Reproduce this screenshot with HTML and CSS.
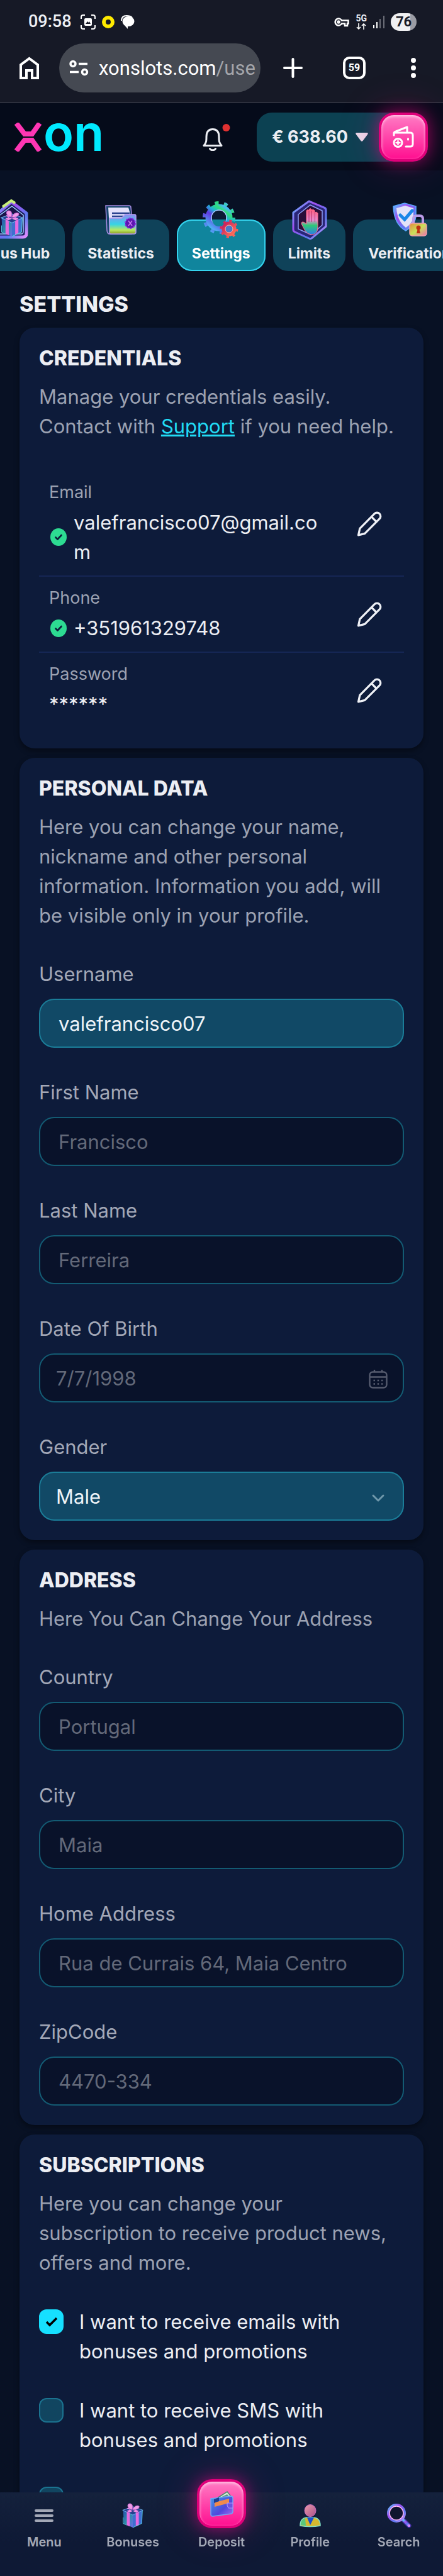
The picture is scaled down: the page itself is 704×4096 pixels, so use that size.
FILE: index.html
```html
<!DOCTYPE html>
<html lang="en">
<head>
    <meta charset="UTF-8">
    <meta name="viewport" content="width=device-width, initial-scale=1.0">
    <title>Settings</title>
    <link rel="stylesheet" href="styles.css">
</head>
<body>
    <!-- shared gradients -->
    <svg class="defs" width="0" height="0" aria-hidden="true">
        <defs>
            <linearGradient id="neon" x1="0" y1="0" x2="1" y2="1">
                <stop offset="0" stop-color="#54c8ff"/>
                <stop offset="0.35" stop-color="#a04ff0"/>
                <stop offset="0.7" stop-color="#5a7bf0"/>
                <stop offset="1" stop-color="#e58cff"/>
            </linearGradient>
            <linearGradient id="gear" x1="0.1" y1="1" x2="0.8" y2="0">
                <stop offset="0" stop-color="#4fb4f5"/>
                <stop offset="0.45" stop-color="#6038e0"/>
                <stop offset="0.65" stop-color="#1fb3d8"/>
                <stop offset="0.85" stop-color="#2fe07a"/>
                <stop offset="1" stop-color="#48b8f0"/>
            </linearGradient>
            <linearGradient id="red" x1="0" y1="0" x2="1" y2="1">
                <stop offset="0" stop-color="#c81f5c"/>
                <stop offset="1" stop-color="#ff7058"/>
            </linearGradient>
            <linearGradient id="folder" x1="0" y1="0" x2="0" y2="1">
                <stop offset="0" stop-color="#8f8df0"/>
                <stop offset="0.5" stop-color="#35d4e6"/>
                <stop offset="0.8" stop-color="#b9e860"/>
                <stop offset="1" stop-color="#8a9a20"/>
            </linearGradient>
            <linearGradient id="hand" x1="0" y1="0" x2="0" y2="1">
                <stop offset="0" stop-color="#ff5a78"/>
                <stop offset="0.45" stop-color="#e58ad0"/>
                <stop offset="0.65" stop-color="#2fc878"/>
                <stop offset="1" stop-color="#2b7be8"/>
            </linearGradient>
            <linearGradient id="lock" x1="0" y1="0" x2="1" y2="1">
                <stop offset="0" stop-color="#e88b3c"/>
                <stop offset="0.5" stop-color="#c9e05a"/>
                <stop offset="1" stop-color="#f06fb0"/>
            </linearGradient>
            <linearGradient id="box" x1="0" y1="0" x2="1" y2="1">
                <stop offset="0" stop-color="#2b4fb0"/>
                <stop offset="0.5" stop-color="#2a8fa8"/>
                <stop offset="1" stop-color="#6d6ae8"/>
            </linearGradient>
            <linearGradient id="purse" x1="0" y1="0" x2="1" y2="1">
                <stop offset="0" stop-color="#3f9be8"/>
                <stop offset="0.6" stop-color="#5148dc"/>
                <stop offset="1" stop-color="#a46cf0"/>
            </linearGradient>
            <linearGradient id="head" x1="0" y1="0" x2="1" y2="1">
                <stop offset="0" stop-color="#e89aa8"/>
                <stop offset="1" stop-color="#a8508c"/>
            </linearGradient>
            <symbol id="gift" viewBox="0 0 36 42">
                <path d="M2 12 18 18v23L3 34z" fill="url(#box)"/>
                <path d="M34 12 18 18v23l15-7z" fill="#3f6fd0"/>
                <path d="M1 12 18 6l17 6-17 8z" fill="#24408f" stroke="#6fb8f0"/>
                <path d="M8 14v23l5 2V17zM28 14v23l-5 2V17z" fill="#e66ae0"/>
                <path d="M8 13 24 7l4 2-16 7zM28 13 12 7 8 9l16 7z" fill="#f08ae8"/>
                <path d="M17 11C8 9 8 1 13 1s5 5 4 10zM18 11c1-5 7-8 10-6s-3 7-10 6z" fill="#f09ce6" stroke="#c060d0"/>
                <path d="M2 24v10l6 3M34 13l-1 21-15 7" fill="none" stroke="#58d0e8"/>
            </symbol>
            <symbol id="pencil" viewBox="0 0 24 24">
                <path d="M16.2 3.6a2.9 2.9 0 0 1 4.2 4.2L8.2 20 2.9 21.3 4.1 15.8zM13.7 6.1l4.2 4.2" fill="none" stroke="#eef0f5" stroke-width="1.700" stroke-linecap="round" stroke-linejoin="round"/>
            </symbol>
            <symbol id="verified" viewBox="0 0 26 28">
                <ellipse cx="13" cy="14" rx="13" ry="14" fill="#2ddb92"/>
                <path d="M8.500 14.500l3 3 6-6.500" fill="none" stroke="#0d1b3a" stroke-width="2.600" stroke-linecap="round" stroke-linejoin="round"/>
            </symbol>
        </defs>
    </svg>

    <div class="chrome">
        <div class="status">
            <span class="clock">09:58</span>
            <svg width="24" height="24" viewBox="0 0 24 24" fill="none" stroke="#fff" stroke-width="2">
                <path d="M1 7V4q0-3 3-3h3M17 1h3q3 0 3 3v3M23 17v3q0 3-3 3h-3M7 23H4q-3 0-3-3v-3"/>
                <rect x="6" y="6" width="12" height="12" rx="2" fill="#fff" stroke="none"/>
                <path d="M8 15l3-4 2 2 1-2 2 4z" fill="#161926" stroke="none"/>
            </svg>
            <svg width="20" height="20" viewBox="0 0 20 20"><circle cx="10" cy="10" r="7" fill="none" stroke="#ffea00" stroke-width="6"/></svg>
            <svg width="22" height="22" viewBox="0 0 22 22">
                <path d="M1 9C1 3 5 1 9 1c5 0 8 2 9 3" fill="none" stroke="#fff" stroke-width="2"/>
                <ellipse cx="12" cy="10" rx="9.500" ry="8" fill="#fff"/>
                <path d="M4 14l7 8v-5z" fill="#fff"/>
            </svg>
            <svg class="status-right" width="24" height="16" viewBox="0 0 24 16" fill="none" stroke="#fff" stroke-width="2.500">
                <path d="M12 5.500h10.500v5H21V14h-4v-3.500h-5a5.500 5.500 0 1 1 0-5z"/>
                <circle cx="7" cy="8" r="1.500"/>
            </svg>
            <span class="network">
                5G
                <svg width="16" height="10" viewBox="0 0 16 10" fill="none" stroke="#fff" stroke-width="1.600"><path d="M4 0v9M1 6l3 3 3-3M12 10V1M9 4l3-3 3 3"/></svg>
            </span>
            <svg width="18" height="20" viewBox="0 0 18 20">
                <path d="M0 15h2v5H0zM5 10h2v10H5z" fill="#fff"/>
                <path d="M10 5h2v15h-2zM16 0h2v20h-2z" fill="#6c6e78"/>
            </svg>
            <span class="battery">76</span>
        </div>
        <div class="toolbar">
            <button type="button" class="plain" aria-label="Home">
                <svg width="31" height="36" viewBox="0 0 31 36" fill="none" stroke="#fff" stroke-width="4"><path d="M2 34V13L15.500 3 29 13v21h-9V22h-9v12z"/></svg>
            </button>
            <button type="button" class="address">
                <svg width="31" height="26" viewBox="0 0 31 26" fill="none" stroke="#fff" stroke-width="3.500"><circle cx="6" cy="6.500" r="4"/><path d="M15 6.500h14M1 19.500h14"/><circle cx="24.500" cy="19.500" r="4"/></svg>
                <span class="url">xonslots.com<span>/use</span></span>
            </button>
            <div class="toolbar-actions">
                <button type="button" class="plain" aria-label="New tab">
                    <svg width="31" height="32" viewBox="0 0 31 32" stroke="#fff" stroke-width="4" stroke-linecap="round"><path d="M2 16h27M15.500 2v28"/></svg>
                </button>
                <button type="button" class="tab-count" aria-label="Open tabs">59</button>
                <button type="button" class="plain" aria-label="More">
                    <svg width="24" height="32" viewBox="0 0 24 32" fill="#fff"><circle cx="12" cy="4" r="4"/><circle cx="12" cy="16" r="4"/><circle cx="12" cy="28" r="4"/></svg>
                </button>
            </div>
        </div>
    </div>

    <header class="header">
        <a href="#" class="logo" aria-label="xon">
            <svg width="142" height="46" viewBox="0 0 142 46">
                <path d="M4 1l13 17h12L41 1M4 45l13-17h12l12 17" fill="none" stroke="#ff36b4" stroke-width="8"/>
                <text x="47" y="45" class="logo-text">on</text>
            </svg>
        </a>
        <button type="button" class="plain bell" aria-label="Notifications">
            <svg width="44" height="44" viewBox="0 0 44 44" fill="none">
                <path d="M2 35.500h28c-4-5-4-7-4-14C26 14 23 9.500 16 9.500S6 14 6 21.500c0 7 0 9-4 14z" stroke="#eceef3" stroke-width="3" stroke-linejoin="round"/>
                <path d="M11.500 40.500a5 4 0 0 0 9 0" stroke="#eceef3" stroke-width="3" stroke-linecap="round"/>
                <circle cx="37.500" cy="7" r="6" fill="#e03131"/>
            </svg>
        </button>
        <div class="wallet">
            <button type="button" class="balance">€ 638.60
                <svg width="20" height="14" viewBox="0 0 20 14"><path d="M2 0h16q3 0 1 3l-7.500 10q-1.500 1.500-3 0L1 3q-2-3 1-3z" fill="#ead9ea"/></svg>
            </button>
            <button type="button" class="pink-button" aria-label="Deposit">
                <svg width="34" height="36" viewBox="0 0 34 36" fill="none" stroke="#fff" stroke-width="3" stroke-linecap="round" stroke-linejoin="round">
                    <path d="M2 15v-3q0-2 3-3L23 2v8M2 11h26q4 0 4 4v14q0 4-4 4h-7"/>
                    <circle cx="8.500" cy="27" r="6.500"/><path d="M8.500 24v6M5.500 27h6" stroke-width="2.400"/>
                    <path d="M24.500 20.500v1.500"/>
                </svg>
            </button>
        </div>
    </header>

    <nav class="tabs" aria-label="Account">
        <div class="tabs-list">
            <a href="#" class="tab">
                <svg width="60" height="64" viewBox="0 0 60 64">
                    <path d="M4 26 30 4l24 18v32q0 6-6 6H10q-6 0-6-6z" fill="#1b1d5c" stroke="url(#neon)" stroke-width="5" stroke-linejoin="round"/>
                    <path d="M9 27 31 11l18 14v26q0 4-4 4H13q-4 0-4-4z" fill="#1a1348" stroke="#9cc9ff" stroke-width="1.500"/>
                    <path d="M16 12 30 2l6 4" fill="none" stroke="#c9f07a" stroke-width="4"/>
                    <use href="#gift" x="12" y="17" width="38" height="43"/>
                </svg>
                <span>Bonus Hub</span>
            </a>
            <a href="#" class="tab">
                <svg width="60" height="64" viewBox="0 0 60 64">
                    <path d="M6 10h37q3 0 3 3l1 10v32H12q-3 0-4-5z" fill="#17456d" stroke="#a78be0" stroke-width="1.500"/>
                    <path d="M10 13h32l3 10v22H12z" fill="#e4e2fb"/>
                    <path d="M16 22h28M16 27h18" stroke="#2b4390" stroke-width="2.400"/>
                    <path d="M12 30h19l6-6h15q2 0 2 3v25q0 3-3 3H14q-2 0-2-3z" fill="url(#folder)" stroke="#b29af0" stroke-width="1.500"/>
                    <circle cx="45" cy="38" r="8" fill="#5c16b0" stroke="#8a2be2" stroke-dasharray="3 2" stroke-width="2"/>
                    <path d="M42 34l6 8M48 34l-6 8" stroke="#c97bf5" stroke-width="1.500"/>
                </svg>
                <span>Statistics</span>
            </a>
            <a href="#" class="tab active" aria-current="page">
                <svg width="60" height="64" viewBox="0 0 60 64" fill="none">
                    <circle cx="27" cy="29" r="23" stroke="url(#gear)" stroke-width="6" stroke-dasharray="6 8.450"/>
                    <circle cx="27" cy="29" r="16.500" stroke="url(#gear)" stroke-width="10"/>
                    <circle cx="27" cy="29" r="12" stroke="#a9c4ff" stroke-width="1.500"/>
                    <circle cx="27" cy="29" r="11" fill="#0b1a33"/>
                    <path d="M16 32a11 11 0 0 0 22 0z" fill="#10859d"/>
                    <circle cx="43" cy="47" r="12.500" stroke="url(#red)" stroke-width="4" stroke-dasharray="4 5.800"/>
                    <circle cx="43" cy="47" r="8.500" stroke="url(#red)" stroke-width="6"/>
                    <circle cx="43" cy="47" r="6" fill="#4a79c8" stroke="#ffb0a0" stroke-width="1"/>
                </svg>
                <span>Settings</span>
            </a>
            <a href="#" class="tab">
                <svg width="60" height="64" viewBox="0 0 60 64" fill="none">
                    <path d="M30 3 54 13q3 1 3 4v26L34 62q-2 1-4 0L8 52q-3-1-3-4V21z" fill="#2a2577" stroke="url(#neon)" stroke-width="3" stroke-linejoin="round"/>
                    <path d="M32 9 51 18v23L33 56 13 47V24z" fill="#2a0d38" stroke="#8c9df5" stroke-width="1.500"/>
                    <path d="M26 39V18q2-3 4 0v-2q2-3 4 0v1q3-2 5 1v3q3-2 5 1v22q0 12-10 12-6 0-10-6l-6-11q0-5 5-2z" fill="url(#hand)" stroke="#ff6a8a" stroke-width="1"/>
                    <path d="M30 18v18M34.500 18v18M39.500 19v17" stroke="#b8306a" stroke-width="1"/>
                </svg>
                <span>Limits</span>
            </a>
            <a href="#" class="tab">
                <svg width="60" height="64" viewBox="0 0 60 64" fill="none">
                    <path d="M4 11 22 6l18 5v14q0 14-16 25Q5 40 4 11z" fill="url(#neon)" stroke="#58a8ff" stroke-width="1.500"/>
                    <path d="M9 14 23 10l13 4v12q0 11-12 19Q10 34 9 14z" fill="#e3e2f8"/>
                    <path d="M15 25l7 7 12-14" stroke="#1a86e8" stroke-width="5" stroke-linecap="round"/>
                    <path d="M36 42V31q0-5 5-5h5q5 0 5 5v11" stroke="#b99be8" stroke-width="4"/>
                    <rect x="30" y="38" width="27" height="20" rx="4" fill="url(#lock)" stroke="#f0a0a8" stroke-width="1.500"/>
                    <circle cx="44" cy="45" r="3.500" fill="#c03010"/><path d="M43 46h2l2 8h-6z" fill="#c03010"/>
                </svg>
                <span>Verification</span>
            </a>
        </div>
    </nav>

    <main class="content">
        <h1>SETTINGS</h1>

        <section class="card">
            <h2>CREDENTIALS</h2>
            <p>Manage your credentials easily. Contact with <a href="#">Support</a> if you need help.</p>
            <div class="credentials">
                <div class="credential">
                    <div class="credential-info">
                        <div class="credential-name">Email</div>
                        <div class="credential-value">
                            <svg width="26" height="28"><use href="#verified"/></svg>
                            <span>valefrancisco07@gmail.com</span>
                        </div>
                    </div>
                    <button type="button" class="edit" aria-label="Edit email"><svg width="46" height="46"><use href="#pencil"/></svg></button>
                </div>
                <div class="credential">
                    <div class="credential-info">
                        <div class="credential-name">Phone</div>
                        <div class="credential-value">
                            <svg width="26" height="28"><use href="#verified"/></svg>
                            <span>+351961329748</span>
                        </div>
                    </div>
                    <button type="button" class="edit" aria-label="Edit phone"><svg width="46" height="46"><use href="#pencil"/></svg></button>
                </div>
                <div class="credential">
                    <div class="credential-info">
                        <div class="credential-name">Password</div>
                        <div class="credential-value password">******</div>
                    </div>
                    <button type="button" class="edit" aria-label="Edit password"><svg width="46" height="46"><use href="#pencil"/></svg></button>
                </div>
            </div>
        </section>

        <section class="card">
            <h2>PERSONAL DATA</h2>
            <p>Here you can change your name, nickname and other personal information. Information you add, will be visible only in your profile.</p>
            <form class="fields">
                <div class="field">
                    <label for="username">Username</label>
                    <input type="text" id="username" value="valefrancisco07">
                </div>
                <div class="field">
                    <label for="first-name">First Name</label>
                    <input type="text" id="first-name" value="Francisco" disabled>
                </div>
                <div class="field">
                    <label for="last-name">Last Name</label>
                    <input type="text" id="last-name" value="Ferreira" disabled>
                </div>
                <div class="field">
                    <label for="birth">Date Of Birth</label>
                    <div class="control">
                        <input type="text" id="birth" class="with-icon" value="7/7/1998" disabled>
                        <svg class="control-icon" width="30" height="30" viewBox="0 0 30 30" fill="none" stroke="#555b6e" stroke-width="2.400">
                            <rect x="1.500" y="3.500" width="27" height="25" rx="5"/><path d="M1.500 11.500h27M9 0v4M21 0v4"/>
                            <path d="M7.500 17h2.500M13.700 17h2.500M20 17h2.500M7.500 22.500h2.500M13.700 22.500h2.500M20 22.500h2.500"/>
                        </svg>
                    </div>
                </div>
                <div class="field">
                    <label for="gender">Gender</label>
                    <div class="control">
                        <select id="gender">
                            <option>Male</option>
                            <option>Female</option>
                        </select>
                        <svg class="control-icon" width="30" height="30" viewBox="0 0 30 30" fill="none" stroke="#6f97aa" stroke-width="3" stroke-linecap="round" stroke-linejoin="round"><path d="M7 12l8 8 8-8"/></svg>
                    </div>
                </div>
            </form>
        </section>

        <section class="card">
            <h2>ADDRESS</h2>
            <p>Here You Can Change Your Address</p>
            <form class="fields">
                <div class="field">
                    <label for="country">Country</label>
                    <input type="text" id="country" value="Portugal" disabled>
                </div>
                <div class="field">
                    <label for="city">City</label>
                    <input type="text" id="city" value="Maia" disabled>
                </div>
                <div class="field">
                    <label for="home">Home Address</label>
                    <input type="text" id="home" value="Rua de Currais 64, Maia Centro" disabled>
                </div>
                <div class="field">
                    <label for="zip">ZipCode</label>
                    <input type="text" id="zip" value="4470-334" disabled>
                </div>
            </form>
        </section>

        <section class="card last">
            <h2>SUBSCRIPTIONS</h2>
            <p>Here you can change your subscription to receive product news, offers and more.</p>
            <div class="subscriptions">
                <label class="check"><input type="checkbox" checked><span>I want to receive emails with bonuses and promotions</span></label>
                <label class="check"><input type="checkbox"><span>I want to receive SMS with bonuses and promotions</span></label>
                <label class="check"><input type="checkbox" aria-label="Other promotions"></label>
            </div>
        </section>
    </main>

    <nav class="bottom-nav" aria-label="Main">
        <a href="#">
            <svg width="40" height="40" viewBox="0 0 40 40" stroke="#a3a8b6" stroke-width="4" stroke-linecap="round"><path d="M7 12h26M7 20h26M7 28h26"/></svg>
            Menu
        </a>
        <a href="#">
            <svg width="40" height="40"><use href="#gift"/></svg>
            Bonuses
        </a>
        <a href="#">
            <span class="pink-button">
                <svg width="40" height="42" viewBox="0 0 40 42">
                    <path d="M7 16 29 2l5 6v14H8z" fill="#d8ead8" stroke="#4d8870" stroke-width="1.500"/>
                    <path d="M10 15 29 6l3 4-20 9z" fill="#5f9a80"/>
                    <path d="M3 13l32-4q3 0 3 3v22q0 2-2 3L6 41q-3 0-3-3z" fill="url(#purse)" stroke="#6fa8f5" stroke-width="1.500"/>
                    <path d="M9 19l23-6v7L9 26z" fill="#f08a4c"/>
                    <path d="M8 14l8-3v6l-8 3z" fill="#1d3e94"/>
                    <path d="M29 20h9v8h-7q-3-4-2-8z" fill="#6d52e0" stroke="#b49cff"/>
                </svg>
            </span>
            Deposit
        </a>
        <a href="#">
            <svg width="40" height="40" viewBox="0 0 40 40">
                <ellipse cx="20" cy="12" rx="9" ry="9.500" fill="url(#head)" stroke="#c86cc0"/>
                <path d="M4 36q0-13 12-13h8q12 0 12 13-16 3-32 0z" fill="#d5b92e" stroke="#7fe0c8" stroke-width="1.500"/>
                <path d="M5 35q0-9 7-11l1 12z" fill="#58c87c"/>
                <path d="M15 23h11l-6 12z" fill="#1a50d0"/>
            </svg>
            Profile
        </a>
        <a href="#">
            <svg width="40" height="40" viewBox="0 0 40 40" fill="none">
                <path d="M27 27l9 9" stroke="#3c2fa0" stroke-width="7" stroke-linecap="round"/>
                <path d="M27 27l9 9" stroke="url(#neon)" stroke-width="4" stroke-linecap="round"/>
                <circle cx="16" cy="16" r="13" fill="#10152f" stroke="url(#neon)" stroke-width="4"/>
                <circle cx="16" cy="16" r="11" stroke="#ffb3f5" stroke-width="1.500"/>
            </svg>
            Search
        </a>
    </nav>
</body>
</html>
```
FILE: styles.css
```css
* {
    box-sizing: border-box;
}
body {
    margin: 0;
    min-height: 100vh;
    background-color: #081124;
    color: #eceef3;
    font-family: Inter, "Liberation Sans", sans-serif;
    font-size: 31px;
    line-height: 47px;
    overflow-x: hidden;
}
svg {
    display: block;
    flex-shrink: 0;
}
.defs {
    position: absolute;
}
button, input, select {
    margin: 0;
    font-family: inherit;
    font-size: inherit;
    color: inherit;
}
button {
    padding: 0;
    border: none;
    background: none;
    cursor: pointer;
}
a {
    color: inherit;
    text-decoration: none;
}

/* browser bar */
.chrome {
    background-color: #161926;
    border-bottom: 2px solid #2d303d;
    font-family: Roboto, Arial, sans-serif;
}
.status {
    display: flex;
    align-items: center;
    gap: 10px;
    height: 69px;
    padding: 0 42px 0 45px;
}
.clock {
    margin-right: 4px;
    font-size: 27px;
    font-weight: 500;
}
.status-right {
    margin-left: auto;
}
.network {
    display: flex;
    flex-direction: column;
    align-items: center;
    gap: 2px;
    font-size: 14px;
    font-weight: 700;
    line-height: 12px;
}
.battery {
    width: 41px;
    border-radius: 14px;
    background: linear-gradient(90deg, #f0f0f2 76%, #9b9ca4 76%);
    color: #161926;
    font-size: 22px;
    font-weight: 700;
    line-height: 28px;
    text-align: center;
}
.toolbar {
    display: flex;
    align-items: center;
    padding: 0 35px 15px 31px;
}
.address {
    display: flex;
    flex: 1;
    align-items: center;
    gap: 16px;
    min-width: 0;
    height: 78px;
    margin: 0 36px 0 32px;
    padding: 0 8px 0 16px;
    border-radius: 39px;
    background-color: #454952;
    font-size: 31px;
    color: #fff;
}
.url {
    white-space: nowrap;
}
.url span {
    color: #a3a5aa;
}
.toolbar-actions {
    display: flex;
    align-items: center;
    gap: 64px;
}
.tab-count {
    width: 36px;
    height: 36px;
    border: 4px solid #fff;
    border-radius: 10px;
    font-size: 16px;
    font-weight: 700;
    line-height: 28px;
    color: #fff;
}

/* site header */
.header {
    display: flex;
    align-items: center;
    height: 107px;
    padding: 0 24px 0 22px;
    background-color: #050b1a;
}
.logo-text {
    fill: #00eaff;
    font-size: 79px;
    font-weight: 600;
}
.bell {
    margin: 0 42px 0 auto;
}
.wallet {
    display: flex;
    align-items: center;
    gap: 17px;
    padding-left: 24px;
    border-radius: 24px;
    background-color: #0c4152;
}
.balance {
    display: flex;
    align-items: center;
    gap: 12px;
    font-size: 27px;
    font-weight: 700;
}
.pink-button {
    display: flex;
    align-items: center;
    justify-content: center;
    width: 78px;
    height: 78px;
    border: 4px solid #e0007a;
    border-radius: 24px;
    background: linear-gradient(#ff7cc4, #ff0f90);
    box-shadow: inset 0 2px 4px #ffd0ea, 0 0 24px rgba(255, 0, 140, 0.5), 0 0 64px rgba(255, 0, 140, 0.25);
}

/* account tabs */
.tabs {
    overflow: hidden;
    padding: 78px 0 16px;
}
.tabs-list {
    display: flex;
    gap: 12px;
    margin-left: -67px;
}
.tab {
    display: flex;
    flex-shrink: 0;
    flex-direction: column;
    align-items: center;
    gap: 8px;
    padding: 0 24px 14px;
    border-radius: 24px;
    background-color: #0f4259;
    font-size: 23px;
    font-weight: 700;
    line-height: 28px;
}
.tab svg {
    margin-top: -32px;
}
.tab.active {
    background-color: #10859d;
    box-shadow: inset 0 0 0 2px #35d3ee;
    color: #fff;
}

/* cards */
.content {
    display: flex;
    flex-direction: column;
    gap: 15px;
    padding: 0 31px;
}
h1 {
    margin: 16px 0 2px;
    font-size: 34px;
    font-weight: 800;
    line-height: 41px;
}
.card {
    padding: 31px;
    border-radius: 24px;
    background-color: #0d1b3a;
    box-shadow: 0 4px 8px rgba(0, 0, 0, 0.4);
}
.card.last {
    padding-bottom: 102px;
}
h2 {
    margin: 0 0 19px;
    font-size: 32px;
    font-weight: 800;
    line-height: 36px;
}
p {
    margin: 0;
    padding-right: 8px;
    color: #9ca2b2;
}
p a {
    color: #22dcf5;
    text-decoration: underline;
}
.credentials {
    padding: 48px 0 2px;
}
.credential {
    display: flex;
    align-items: center;
    gap: 24px;
    padding: 15px 16px 14px;
}
.credential + .credential {
    border-top: 2px solid #152654;
}
.credential-info {
    flex: 1;
    min-width: 0;
}
.credential-name {
    margin-bottom: 6px;
    font-size: 27px;
    line-height: 37px;
    color: #9ca2b2;
}
.credential-value {
    display: flex;
    align-items: center;
    gap: 11px;
    padding-left: 2px;
    word-break: break-all;
}
.credential-value.password {
    padding-left: 0;
}
.edit {
    display: flex;
    align-items: center;
    justify-content: center;
    width: 78px;
    height: 78px;
}
.fields {
    display: flex;
    flex-direction: column;
    gap: 47px;
    margin-top: 46px;
}
.field {
    display: flex;
    flex-direction: column;
    gap: 16px;
}
.field label {
    color: #a3a8b7;
}
.field input, .field select {
    width: 100%;
    height: 78px;
    padding: 0 29px;
    border: 2px solid #1b7d98;
    border-radius: 24px;
    background-color: #114966;
    color: #eef4f8;
    appearance: none;
}
.field input:disabled {
    border-color: #135b73;
    background-color: #09122a;
    color: #636979;
}
.field .with-icon, .field select {
    padding-left: 25px;
}
.control {
    position: relative;
}
.control-icon {
    position: absolute;
    top: 26px;
    right: 26px;
    pointer-events: none;
}
.subscriptions {
    display: flex;
    flex-direction: column;
    gap: 47px;
    margin-top: 47px;
}
.check {
    display: flex;
    align-items: flex-start;
    gap: 25px;
}
.check input {
    flex-shrink: 0;
    width: 39px;
    height: 39px;
    margin: 4px 0 0;
    border: 2px solid #1b7390;
    border-radius: 12px;
    background-color: #114560;
    appearance: none;
}
.check input:checked {
    border-color: #16e0ff;
    background: #16e0ff url("data:image/svg+xml,%3Csvg xmlns='http://www.w3.org/2000/svg' viewBox='0 0 20 16'%3E%3Cpath d='M2 8l5 5L18 2' fill='none' stroke='%23000' stroke-width='3.500'/%3E%3C/svg%3E") center / 20px 16px no-repeat;
}

/* bottom navigation */
.bottom-nav {
    position: fixed;
    right: 0;
    bottom: 0;
    left: 0;
    display: grid;
    grid-template-columns: repeat(5, 1fr);
    align-content: end;
    align-items: end;
    height: 133px;
    padding-bottom: 42px;
    background: linear-gradient(#14213c, #0e1935 60%);
}
.bottom-nav a {
    display: flex;
    flex-direction: column;
    align-items: center;
    gap: 10px;
    color: #a3a8b6;
    font-size: 20px;
    font-weight: 600;
    line-height: 24px;
}
```
